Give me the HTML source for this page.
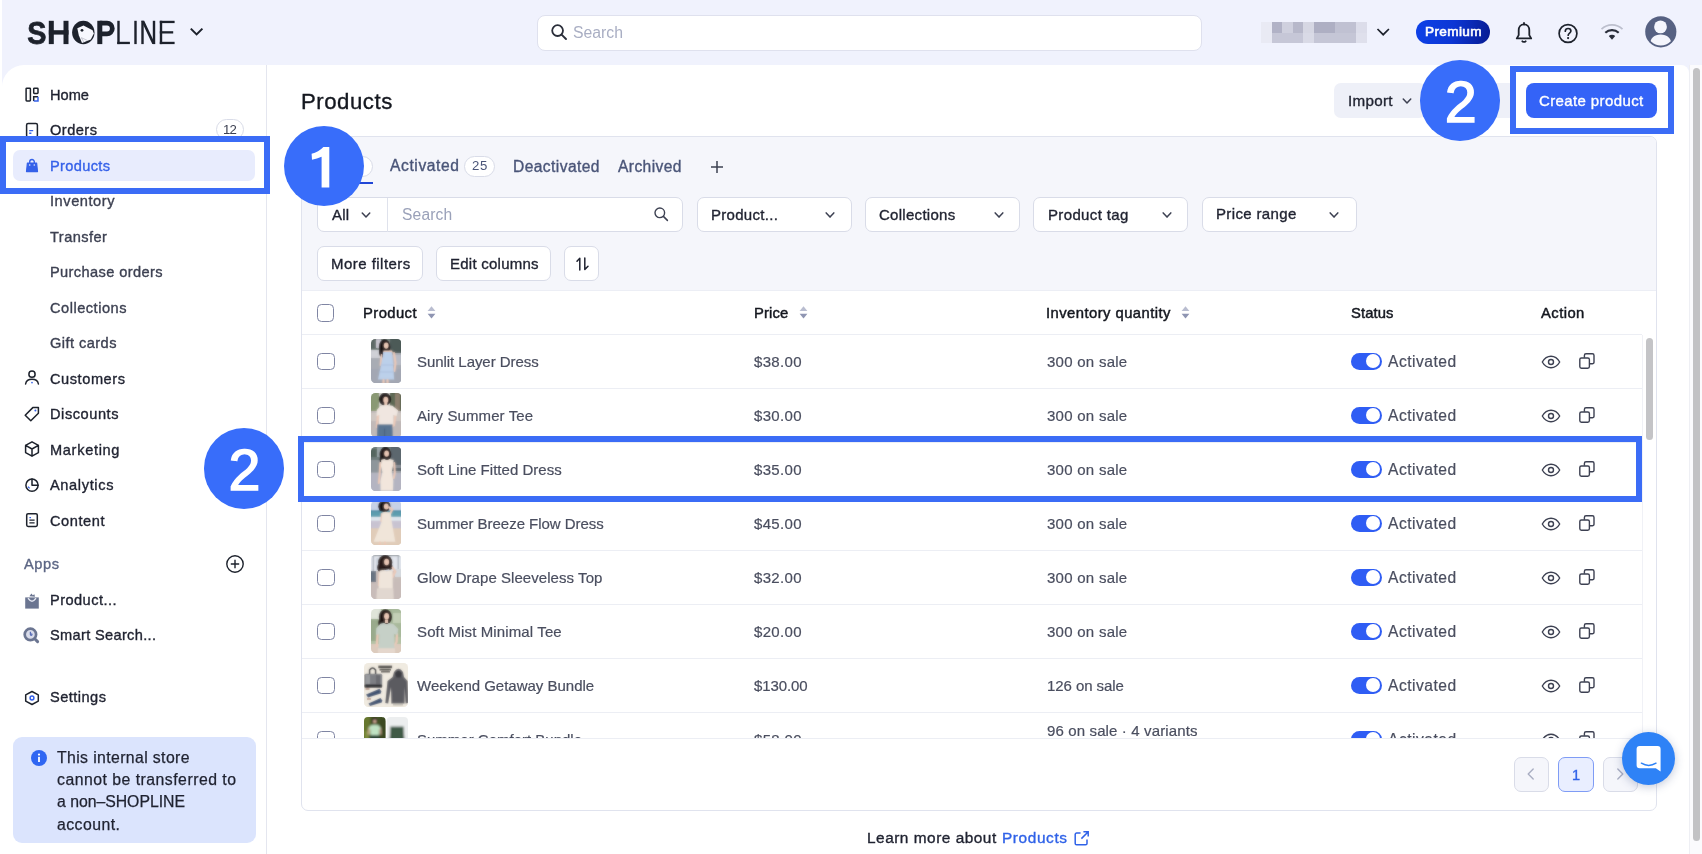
<!DOCTYPE html>
<html>
<head>
<meta charset="utf-8">
<title>Products</title>
<style>
*{box-sizing:border-box;margin:0;padding:0}
html,body{width:1702px;height:854px;overflow:hidden;background:#fff}
body{position:relative;font-family:"Liberation Sans",sans-serif;font-size:14.5px;color:#1f2230}
.a{position:absolute}
.t{position:absolute;white-space:nowrap;line-height:20px;height:20px;will-change:transform}
.m{-webkit-text-stroke:0.35px currentColor}
#hdr{left:0;top:0;width:1702px;height:100px;background:#f0f2fd}
#strip{left:0;top:0;width:2px;height:854px;background:#fff}
#side{left:2px;top:65px;width:265px;height:789px;background:#fff;border-top-left-radius:22px;border-right:1px solid #e4e6ef}
#main{left:267px;top:65px;width:1422px;height:789px;background:#fff;border-top-right-radius:8px}
#sbtrack{left:1689px;top:65px;width:13px;height:789px;background:#fbfbfd;border-left:1px solid #eeeff4}
#sbthumb{left:1692.6px;top:68px;width:7px;height:772.6px;background:#c2c2c4;border-radius:4px}
.nav{color:#1f2230;font-size:14.5px}
.sub{color:#3d4152;font-size:14.5px}
.box{position:absolute;background:#fff;border:1px solid #d9dce8;border-radius:7px}
.hl{position:absolute;border:6px solid #3b6cf6}
.circ{position:absolute;width:80px;height:80px;border-radius:50%;background:#3b6cf6;color:#fff;font-weight:bold;font-size:57px;text-align:center;line-height:80px}
.cb{position:absolute;width:17.6px;height:17.6px;border:1.8px solid #7f85a3;border-radius:4.5px;background:#fff}
.rl{position:absolute;left:302px;width:1340px;height:1px;background:#eceef4}
.row{position:absolute;left:302px;width:1340px;height:54px}
.cell{color:#4a4e5f;font-size:15.3px}
.tg{position:absolute;width:31.3px;height:17.8px;border-radius:9px;background:#2f5df4}
.tg:after{content:"";position:absolute;right:1.8px;top:1.8px;width:14px;height:14px;border-radius:50%;background:#fff}
.th{position:absolute;border-radius:4px;overflow:hidden}
</style>
</head>
<body>
<div class="a" id="hdr"></div>
<div class="a" id="strip"></div>
<div class="a" id="side"></div>
<div class="a" id="main"></div>
<div class="a" id="sbtrack"></div>
<div class="a" id="sbthumb"></div>
<!-- HEADER -->
<!-- logo -->
<svg class="a" style="left:0;top:0;will-change:transform" width="220" height="66" viewBox="0 0 220 66">
  <g fill="#1d222c">
  <text x="27.2" y="44.1" font-family="Liberation Sans" font-weight="bold" font-size="32.2" textLength="19.2" lengthAdjust="spacingAndGlyphs" stroke="#1d222c" stroke-width="0.8">S</text>
  <rect x="48.8" y="20.8" width="5" height="23.3"/><rect x="63.5" y="20.8" width="5" height="23.3"/><rect x="48.8" y="30.2" width="19.7" height="4.4"/>
  <ellipse cx="83.3" cy="32.5" rx="11.2" ry="11.7"/>
  <path d="M99.8 23.2 h7.2 a5.3 5.3 0 0 1 0 10.6 h-7.200" fill="none" stroke="#1d222c" stroke-width="4.8"/><rect x="97.3" y="20.8" width="5" height="23.3"/>
  <rect x="117.300" y="20.8" width="2.400" height="23.3"/><rect x="117.300" y="41.800" width="12.600" height="2.300"/>
  <rect x="134.300" y="20.8" width="2.400" height="23.3"/>
  <rect x="141.300" y="20.8" width="2.400" height="23.3"/><rect x="152.800" y="20.8" width="2.400" height="23.3"/><path d="M141.300 20.8 h2.900 l11 23.300 h-2.900z"/>
  <rect x="159.800" y="20.8" width="2.400" height="23.3"/><rect x="159.800" y="20.8" width="14.800" height="2.300"/><rect x="159.800" y="31.200" width="13.400" height="2.300"/><rect x="159.800" y="41.800" width="14.800" height="2.300"/>
  </g>
  <path d="M77.300 28.200 L83.500 25.400 L92.600 30.300 L93.800 33.500 L90.800 39.400 L82 43 L78.800 35.300z" fill="#f7f8fe"/>
  <circle cx="82" cy="30.300" r="1.400" fill="#1d222c"/>
  <path d="M81 37.500 l6.500 3 M81.500 38 l2.500 4.500" stroke="#9a9ca8" stroke-width="0.500" fill="none"/>
  <path d="M190.800 28.600 l5.800 5.800 5.800-5.800" fill="none" stroke="#1d222c" stroke-width="2"/>
</svg>
<!-- search -->
<div class="box" style="left:536.8px;top:14.7px;width:665px;height:36px;border-color:#dfe1ee;border-radius:8px"></div>
<svg class="a" style="left:550px;top:23px" width="18" height="18" viewBox="0 0 18 18"><circle cx="7.6" cy="7.6" r="5.4" fill="none" stroke="#2a2e3a" stroke-width="1.8"/><path d="M11.6 11.6 L16 16" stroke="#2a2e3a" stroke-width="1.9" stroke-linecap="round"/></svg>
<div class="t" style="left:573px;top:22.5px;font-size:15.8px;color:#a9aec3">Search</div>
<!-- blurred store name -->
<svg class="a" style="left:1261px;top:22px" width="106" height="21" viewBox="0 0 106 21" shape-rendering="crispEdges">
  <rect x="0" y="0" width="106" height="21" fill="#e9eaf4"/>
  <rect x="10.5" y="0" width="10.5" height="10.5" fill="#b1b2c6"/>
  <rect x="21" y="0" width="10.5" height="10.5" fill="#cfd0de"/>
  <rect x="31.5" y="0" width="10.5" height="10.5" fill="#b7b8ca"/>
  <rect x="42" y="0" width="10.5" height="10.5" fill="#d6d7e3"/>
  <rect x="52.5" y="0" width="21.5" height="10.5" fill="#aeafc3"/>
  <rect x="74" y="0" width="21" height="10.5" fill="#c0c1d2"/>
  <rect x="95" y="0" width="11" height="10.5" fill="#dcddea"/>
  <rect x="10.5" y="10.5" width="32" height="10.5" fill="#c6c7d7"/>
  <rect x="42" y="10.5" width="10.5" height="10.5" fill="#d9dae6"/>
  <rect x="52.5" y="10.5" width="42.5" height="10.5" fill="#c5c6d6"/>
  <rect x="95" y="10.5" width="11" height="10.5" fill="#dfe0ec"/>
</svg>
<svg class="a" style="left:1375px;top:26px" width="16" height="12" viewBox="0 0 16 12"><path d="M2.5 3 l5.7 5.7 5.7-5.7" fill="none" stroke="#1d222c" stroke-width="1.7"/></svg>
<!-- premium -->
<div class="a" style="left:1416px;top:20px;width:74px;height:24px;border-radius:12px;background:linear-gradient(100deg,#0e41e8 0%,#0c36d4 50%,#071b90 100%)"></div>
<div class="t" style="left:1424.8px;top:22.2px;font-size:13.6px;color:#fff;letter-spacing:0.365px;-webkit-text-stroke:0.6px #fff">Premium</div>
<!-- bell -->
<svg class="a" style="left:1511.6px;top:20.8px" width="24" height="26" viewBox="0 0 24 26"><path d="M12 3.400 c-3.300 0-5.300 2.500-5.300 5.900 v4.800 l-1.900 3.300 h14.400 l-1.900-3.300 v-4.800 c0-3.400-2-5.900-5.300-5.900z" fill="none" stroke="#1d222c" stroke-width="1.800" stroke-linejoin="round"/><path d="M9.900 19.600 a2.300 2.300 0 0 0 4.200 0" fill="none" stroke="#1d222c" stroke-width="1.700"/><path d="M12 2v1.400" stroke="#1d222c" stroke-width="1.800" stroke-linecap="round"/></svg>
<!-- help -->
<svg class="a" style="left:1555.7px;top:21.3px" width="24" height="24" viewBox="0 0 24 24"><circle cx="12" cy="12.5" r="8.9" fill="none" stroke="#1d222c" stroke-width="1.7"/><path d="M9.3 10.2 c0-1.7 1.2-2.7 2.8-2.7 s2.8 1 2.8 2.5 c0 2-2.7 2.1-2.7 4.2" fill="none" stroke="#1d222c" stroke-width="1.7" stroke-linecap="round"/><circle cx="12.1" cy="17.1" r="1.1" fill="#1d222c"/></svg>
<!-- wifi -->
<svg class="a" style="left:1599.1px;top:21.4px" width="26" height="22" viewBox="0 0 26 22"><path d="M2.5 8.2 a15 15 0 0 1 21 0" fill="none" stroke="#bcbfcd" stroke-width="1.700"/><path d="M6.3 11.8 a9.6 9.6 0 0 1 13.4 0" fill="none" stroke="#2a2e3a" stroke-width="2.1"/><path d="M9.8 15.1 a4.6 4.6 0 0 1 6.4 0 l-3.2 3.6z" fill="#2a2e3a"/></svg>
<!-- avatar -->
<svg class="a" style="left:1644px;top:16px" width="34" height="32" viewBox="0 0 34 32"><defs><clipPath id="avc"><circle cx="16.800" cy="15.800" r="13.700"/></clipPath></defs><circle cx="16.800" cy="15.800" r="15.600" fill="#566182"/><g clip-path="url(#avc)" fill="#f4f5fc"><circle cx="16.500" cy="10.900" r="6.400"/><path d="M5.800 30 c0-8.200 4.600-11.600 10.900-11.600 s10.900 3.400 10.900 11.600z"/></g></svg>

<!-- SIDEBAR -->
<div class="a" style="left:12.5px;top:149.5px;width:242px;height:31px;border-radius:7px;background:#e8ecfd"></div>
<div class="t m" style="left:50.30px;top:85.00px;font-size:14.60px;color:#1f2230;letter-spacing:0.018px;">Home</div>
<div class="t m" style="left:50.30px;top:120.00px;font-size:14.60px;color:#1f2230;letter-spacing:0.476px;">Orders</div>
<div class="t m" style="left:50.30px;top:156.00px;font-size:14.60px;color:#3561e9;letter-spacing:0.340px;">Products</div>
<div class="t m" style="left:50.30px;top:191.00px;font-size:14.60px;color:#3d4152;letter-spacing:0.556px;">Inventory</div>
<div class="t m" style="left:50.30px;top:227.00px;font-size:14.60px;color:#3d4152;letter-spacing:0.455px;">Transfer</div>
<div class="t m" style="left:50.30px;top:262.00px;font-size:14.60px;color:#3d4152;letter-spacing:0.384px;">Purchase orders</div>
<div class="t m" style="left:50.30px;top:298.00px;font-size:14.60px;color:#3d4152;letter-spacing:0.509px;">Collections</div>
<div class="t m" style="left:50.30px;top:333.00px;font-size:14.60px;color:#3d4152;letter-spacing:0.448px;">Gift cards</div>
<div class="t m" style="left:50.30px;top:369.00px;font-size:14.60px;color:#1f2230;letter-spacing:0.552px;">Customers</div>
<div class="t m" style="left:50.30px;top:404.00px;font-size:14.60px;color:#1f2230;letter-spacing:0.549px;">Discounts</div>
<div class="t m" style="left:50.30px;top:440.00px;font-size:14.60px;color:#1f2230;letter-spacing:0.674px;">Marketing</div>
<div class="t m" style="left:50.30px;top:475.00px;font-size:14.60px;color:#1f2230;letter-spacing:0.635px;">Analytics</div>
<div class="t m" style="left:50.30px;top:511.00px;font-size:14.60px;color:#1f2230;letter-spacing:0.561px;">Content</div>
<svg class="a" style="left:23.00px;top:85.35px" width="18" height="18" viewBox="0 0 18 18"><rect x="3.100" y="3.200" width="4.300" height="12.700" rx="0.700" fill="none" stroke="#1d222c" stroke-width="1.5" stroke-linejoin="round" stroke-linecap="round"/><rect x="10.700" y="3.200" width="4.300" height="5.200" rx="0.700" fill="none" stroke="#1d222c" stroke-width="1.5" stroke-linejoin="round" stroke-linecap="round"/><path d="M10.700 15.900 V11.700 H15" fill="none" stroke="#1d222c" stroke-width="1.500"/><path d="M15 11.700 V15.900 H10.700" fill="none" stroke="#3561e9" stroke-width="1.500"/></svg>
<svg class="a" style="left:23.00px;top:121.05px" width="18" height="18" viewBox="0 0 18 18"><rect x="3.600" y="2.400" width="10.800" height="13.600" rx="1.500" fill="none" stroke="#1d222c" stroke-width="1.5" stroke-linejoin="round" stroke-linecap="round"/><path d="M6.200 9.600 h4 M6.200 12.200 h2.200" stroke="#3561e9" stroke-width="1.400"/></svg>
<svg class="a" style="left:23.00px;top:156.05px" width="18" height="18" viewBox="0 0 18 18"><path d="M4.400 7 h9.200 l0.900 8.600 h-11z" fill="#3561e9" stroke="#3561e9" stroke-width="1.200" stroke-linejoin="round"/><path d="M6.700 8.400 v-2.600 a2.300 2.300 0 0 1 4.600 0 v2.600" fill="none" stroke="#3561e9" stroke-width="1.400"/><circle cx="6.700" cy="9" r="0.800" fill="#e8ecfd"/><circle cx="11.300" cy="9" r="0.800" fill="#e8ecfd"/></svg>
<svg class="a" style="left:23.00px;top:369.05px" width="18" height="18" viewBox="0 0 18 18"><circle cx="9" cy="5.200" r="3.100" fill="none" stroke="#1d222c" stroke-width="1.5" stroke-linejoin="round" stroke-linecap="round"/><path d="M2.600 15 c0.500-3.400 3-4.800 6.400-4.800 s5.900 1.400 6.400 4.800" fill="none" stroke="#1d222c" stroke-width="1.5" stroke-linejoin="round" stroke-linecap="round"/><circle cx="9" cy="13.600" r="0.850" fill="#3561e9"/></svg>
<svg class="a" style="left:23.00px;top:404.55px" width="18" height="18" viewBox="0 0 18 18"><path d="M9.800 2.600 h5.600 v5.600 l-7.600 7.600 -5.600-5.600z" fill="none" stroke="#1d222c" stroke-width="1.5" stroke-linejoin="round" stroke-linecap="round"/><circle cx="12.400" cy="5.600" r="1" fill="#3561e9"/></svg>
<svg class="a" style="left:23.00px;top:440.05px" width="18" height="18" viewBox="0 0 18 18"><path d="M9 1.800 l6.400 3.600 v7.200 l-6.400 3.600 -6.400-3.600 v-7.200z M2.600 5.400 l6.400 3.600 6.400-3.600 M9 9 v7.200" fill="none" stroke="#1d222c" stroke-width="1.5" stroke-linejoin="round" stroke-linecap="round"/></svg>
<svg class="a" style="left:23.00px;top:475.55px" width="18" height="18" viewBox="0 0 18 18"><circle cx="9" cy="9.200" r="6.100" fill="none" stroke="#1d222c" stroke-width="1.5" stroke-linejoin="round" stroke-linecap="round"/><path d="M9 3.100 v6.100 h6.100" fill="none" stroke="#1d222c" stroke-width="1.5" stroke-linejoin="round" stroke-linecap="round"/><path d="M5 10.600 l1.600 1.800" stroke="#3561e9" stroke-width="1.300" fill="none"/></svg>
<svg class="a" style="left:23.00px;top:511.35px" width="18" height="18" viewBox="0 0 18 18"><rect x="3.700" y="2.700" width="10.600" height="12.800" rx="1.400" fill="none" stroke="#1d222c" stroke-width="1.5" stroke-linejoin="round" stroke-linecap="round"/><path d="M6.400 6.600 h1.600" stroke="#3561e9" stroke-width="1.300"/><path d="M6.400 9.200 h5.200 M6.400 11.800 h5.200" stroke="#1d222c" stroke-width="1.300"/></svg>
<div class="a" style="left:215.5px;top:118.6px;width:28.7px;height:21.9px;border-radius:11px;border:1px solid #d9dce8;background:#fff"></div>
<div class="t" style="left:223.20px;top:120.00px;font-size:13.20px;color:#3d4152;letter-spacing:-0.883px;">12</div>
<div class="t m" style="left:23.80px;top:554.00px;font-size:14.60px;color:#5b6584;letter-spacing:0.574px;">Apps</div>
<svg class="a" style="left:225.00px;top:554.00px" width="20" height="20" viewBox="0 0 20 20"><circle cx="10" cy="10" r="8.200" fill="none" stroke="#1d222c" stroke-width="1.400"/><path d="M10 5.800 v8.400 M5.800 10 h8.400" stroke="#1d222c" stroke-width="1.400"/></svg>
<div class="t m" style="left:50.30px;top:590.00px;font-size:14.60px;color:#1f2230;letter-spacing:0.446px;">Product...</div>
<div class="t m" style="left:50.30px;top:625.00px;font-size:14.60px;color:#1f2230;letter-spacing:0.327px;">Smart Search...</div>
<svg class="a" style="left:23.20px;top:592.20px" width="18" height="18" viewBox="0 0 18 18"><path d="M2.200 5.400 h13.600 v11.200 h-13.600z" fill="#6b7591"/><path d="M6.400 4.200 l2-2.600 1.400 1.600 1.600-1 0.600 2.600z" fill="#6b7591"/><path d="M5.400 6.600 q3.600 5.200 7.200 0" fill="none" stroke="#e4e7f2" stroke-width="1.500" stroke-linecap="round"/></svg>
<svg class="a" style="left:22.20px;top:625.80px" width="18" height="18" viewBox="0 0 18 18"><circle cx="8.400" cy="8.400" r="5.700" fill="#d9dcea" stroke="#6b7591" stroke-width="2.700"/><path d="M13.200 13.200 L15.600 15.600" stroke="#6b7591" stroke-width="3" stroke-linecap="round"/><path d="M8.400 5.800 v2.800 a0.800 0.800 0 1 0 0.800-0.800" stroke="#5b6fb8" stroke-width="1.300" fill="none"/></svg>
<div class="t m" style="left:50.30px;top:687.00px;font-size:14.60px;color:#1f2230;letter-spacing:0.464px;">Settings</div>
<svg class="a" style="left:23.25px;top:688.50px" width="18" height="18" viewBox="0 0 18 18"><path d="M9 2.500 l6.300 3.400 v6.200 l-6.300 3.400 -6.300-3.400 v-6.200z" fill="none" stroke="#1d222c" stroke-width="1.5" stroke-linejoin="round" stroke-linecap="round"/><circle cx="9" cy="9" r="1.900" fill="none" stroke="#3561e9" stroke-width="1.500"/></svg>
<div class="a" style="left:12.5px;top:736.5px;width:243px;height:106.5px;border-radius:9px;background:#dbe4fd"></div>
<svg class="a" style="left:30.8px;top:750px" width="16" height="16" viewBox="0 0 16 16"><circle cx="8" cy="8" r="8" fill="#2f66f2"/><rect x="7.100" y="6.800" width="1.800" height="5.200" fill="#fff"/><circle cx="8" cy="4.600" r="1.100" fill="#fff"/></svg>
<div class="t" style="left:56.80px;top:748.00px;font-size:15.80px;color:#1f2230;letter-spacing:0.385px;-webkit-text-stroke:0.25px #1f2230;">This internal store</div>
<div class="t" style="left:56.80px;top:770.00px;font-size:15.80px;color:#1f2230;letter-spacing:0.489px;-webkit-text-stroke:0.25px #1f2230;">cannot be transferred to</div>
<div class="t" style="left:56.80px;top:792.00px;font-size:15.80px;color:#1f2230;letter-spacing:-0.018px;-webkit-text-stroke:0.25px #1f2230;">a non–SHOPLINE</div>
<div class="t" style="left:56.80px;top:815.00px;font-size:15.80px;color:#1f2230;letter-spacing:0.467px;-webkit-text-stroke:0.25px #1f2230;">account.</div>

<!-- MAIN -->
<div class="t m" style="left:300.70px;top:92.00px;font-size:22.20px;color:#14171f;letter-spacing:0.527px;">Products</div>
<div class="a" style="left:1334px;top:83.3px;width:92px;height:34.5px;border-radius:7px;background:#eef0f8"></div>
<div class="a" style="left:1436px;top:83.3px;width:80px;height:34.5px;border-radius:7px;background:#eef0f8"></div>
<div class="t m" style="left:1347.70px;top:91.00px;font-size:15.20px;color:#1f2230;letter-spacing:0.284px;">Import</div>
<svg class="a" style="left:1400.30px;top:95.50px" width="14" height="10" viewBox="0 0 14 10"><path d="M3.25 3.00 l3.75 4.00 3.75 -4.00" fill="none" stroke="#3d4152" stroke-width="1.5" stroke-linecap="round" stroke-linejoin="round"/></svg>
<div class="a" style="left:301px;top:136px;width:1355.5px;height:674.5px;border:1px solid #e0e3ee;border-radius:7px;background:#fff;overflow:hidden"><div style="height:154px;background:#f5f6fb;border-bottom:1px solid #eceef5"></div></div>
<div class="a" style="left:342px;top:155.6px;width:30.7px;height:21.9px;border-radius:11px;border:1px solid #d9dce8;background:#fff"></div>
<div class="a" style="left:318px;top:181.8px;width:54.5px;height:2.2px;background:#2046d6"></div>
<div class="t m" style="left:390.00px;top:156.00px;font-size:15.60px;color:#4a5578;letter-spacing:0.604px;">Activated</div>
<div class="a" style="left:464px;top:155.6px;width:30.7px;height:21.9px;border-radius:11px;border:1px solid #d9dce8;background:#fff"></div>
<div class="t" style="left:472.00px;top:156.00px;font-size:13.20px;color:#4a5578;letter-spacing:0.617px;">25</div>
<div class="t m" style="left:512.80px;top:157.00px;font-size:15.60px;color:#4a5578;letter-spacing:0.412px;">Deactivated</div>
<div class="t m" style="left:617.80px;top:157.00px;font-size:15.60px;color:#4a5578;letter-spacing:0.401px;">Archived</div>
<svg class="a" style="left:710px;top:159.500px" width="14" height="14" viewBox="0 0 14 14"><path d="M7 1 v12 M1 7 h12" stroke="#3d4152" stroke-width="1.500"/></svg>
<div class="box" style="left:317.2px;top:197.3px;width:365.8px;height:35px"></div>
<div class="a" style="left:387px;top:198px;width:1px;height:33.5px;background:#dfe2ec"></div>
<div class="t m" style="left:332.00px;top:205.00px;font-size:15.00px;color:#1f2230;letter-spacing:0.164px;">All</div>
<svg class="a" style="left:359.00px;top:209.80px" width="14" height="10" viewBox="0 0 14 10"><path d="M3.25 3.00 l3.75 4.00 3.75 -4.00" fill="none" stroke="#3d4152" stroke-width="1.5" stroke-linecap="round" stroke-linejoin="round"/></svg>
<div class="t" style="left:401.70px;top:205.00px;font-size:15.60px;color:#9aa1b9;letter-spacing:0.154px;">Search</div>
<svg class="a" style="left:653px;top:206px" width="16" height="16" viewBox="0 0 16 16"><circle cx="6.800" cy="6.800" r="4.800" fill="none" stroke="#3d4152" stroke-width="1.400"/><path d="M10.400 10.400 L14.400 14.400" stroke="#3d4152" stroke-width="1.500" stroke-linecap="round"/></svg>
<div class="box" style="left:696.70px;top:197.3px;width:155px;height:35px"></div>
<div class="t m" style="left:710.80px;top:205.00px;font-size:15.00px;color:#1f2230;letter-spacing:0.289px;">Product...</div>
<svg class="a" style="left:823.40px;top:210.00px" width="14" height="10" viewBox="0 0 14 10"><path d="M3.20 2.90 l3.80 4.20 3.80 -4.20" fill="none" stroke="#3d4152" stroke-width="1.5" stroke-linecap="round" stroke-linejoin="round"/></svg>
<div class="box" style="left:864.70px;top:197.3px;width:155px;height:35px"></div>
<div class="t m" style="left:878.80px;top:205.00px;font-size:15.00px;color:#1f2230;letter-spacing:0.283px;">Collections</div>
<svg class="a" style="left:991.60px;top:210.00px" width="14" height="10" viewBox="0 0 14 10"><path d="M3.20 2.90 l3.80 4.20 3.80 -4.20" fill="none" stroke="#3d4152" stroke-width="1.5" stroke-linecap="round" stroke-linejoin="round"/></svg>
<div class="box" style="left:1033.40px;top:197.3px;width:155px;height:35px"></div>
<div class="t m" style="left:1047.50px;top:205.00px;font-size:15.00px;color:#1f2230;letter-spacing:0.358px;">Product tag</div>
<svg class="a" style="left:1160.00px;top:210.00px" width="14" height="10" viewBox="0 0 14 10"><path d="M3.20 2.90 l3.80 4.20 3.80 -4.20" fill="none" stroke="#3d4152" stroke-width="1.5" stroke-linecap="round" stroke-linejoin="round"/></svg>
<div class="box" style="left:1201.70px;top:197.3px;width:155px;height:35px"></div>
<div class="t m" style="left:1215.80px;top:204.00px;font-size:15.00px;color:#1f2230;letter-spacing:0.359px;">Price range</div>
<svg class="a" style="left:1327.00px;top:210.00px" width="14" height="10" viewBox="0 0 14 10"><path d="M3.20 2.90 l3.80 4.20 3.80 -4.20" fill="none" stroke="#3d4152" stroke-width="1.5" stroke-linecap="round" stroke-linejoin="round"/></svg>
<div class="box" style="left:317.2px;top:246px;width:105.6px;height:35px"></div>
<div class="t m" style="left:331.20px;top:254.00px;font-size:15.00px;color:#1f2230;letter-spacing:0.465px;">More filters</div>
<div class="box" style="left:436px;top:246px;width:114.8px;height:35px"></div>
<div class="t m" style="left:449.50px;top:254.00px;font-size:15.00px;color:#1f2230;letter-spacing:0.248px;">Edit columns</div>
<div class="box" style="left:563.7px;top:246px;width:35.3px;height:35px"></div>
<svg class="a" style="left:574.5px;top:256px" width="16" height="16" viewBox="0 0 16 16"><path d="M2 5.200 L4.800 2.200 V14 M9.800 2 V13.600 L13 10.200" fill="none" stroke="#1f2230" stroke-width="1.500" stroke-linejoin="round" stroke-linecap="round"/></svg>
<div class="cb" style="left:316.7px;top:304px"></div>
<div class="t" style="left:363.20px;top:303.00px;font-size:14.80px;color:#14171f;letter-spacing:0.416px;-webkit-text-stroke:0.45px #14171f;">Product</div>
<svg class="a" style="left:426.70px;top:305.80px" width="9" height="13" viewBox="0 0 9 13"><path d="M4.500 0.300 L8.400 5 H0.600z" fill="#b9bdd0"/><path d="M4.500 12.500 L8.400 7.800 H0.600z" fill="#8f95b2"/></svg>
<div class="t" style="left:753.70px;top:303.00px;font-size:14.80px;color:#14171f;letter-spacing:0.145px;-webkit-text-stroke:0.45px #14171f;">Price</div>
<svg class="a" style="left:798.70px;top:305.80px" width="9" height="13" viewBox="0 0 9 13"><path d="M4.500 0.300 L8.400 5 H0.600z" fill="#b9bdd0"/><path d="M4.500 12.500 L8.400 7.800 H0.600z" fill="#8f95b2"/></svg>
<div class="t" style="left:1045.70px;top:303.00px;font-size:14.80px;color:#14171f;letter-spacing:0.451px;-webkit-text-stroke:0.45px #14171f;">Inventory quantity</div>
<svg class="a" style="left:1180.50px;top:305.80px" width="9" height="13" viewBox="0 0 9 13"><path d="M4.500 0.300 L8.400 5 H0.600z" fill="#b9bdd0"/><path d="M4.500 12.500 L8.400 7.800 H0.600z" fill="#8f95b2"/></svg>
<div class="t" style="left:1351.00px;top:303.00px;font-size:14.80px;color:#14171f;letter-spacing:0.108px;-webkit-text-stroke:0.45px #14171f;">Status</div>
<div class="t" style="left:1540.90px;top:303.00px;font-size:14.80px;color:#14171f;letter-spacing:0.433px;-webkit-text-stroke:0.45px #14171f;">Action</div>
<div class="rl" style="top:334px"></div>
<div class="a" style="left:0;top:335px;width:1656px;height:403px;overflow:hidden">
<div class="cb" style="left:317.3px;top:17.60px"></div>
<svg class="a" style="left:370.50px;top:4.30px" width="30.6" height="44.2" viewBox="0 0 30.6 44.2"><defs><clipPath id="tc0"><rect width="30.6" height="44.2" rx="4.5"/></clipPath><filter id="tb0" x="-10%" y="-10%" width="120%" height="120%"><feGaussianBlur stdDeviation="0.80"/></filter></defs><g clip-path="url(#tc0)"><g filter="url(#tb0)"><rect x="-2" y="-2" width="35" height="48" fill="#a9acb4" /><rect x="-2" y="-2" width="35" height="13" fill="#7d8783" /><rect x="19" y="-2" width="14" height="16" fill="#4d5a58" /><rect x="-2" y="-2" width="8" height="12" fill="#5f6b67" /><rect x="5" y="0" width="5" height="9" fill="#c9c6cf" /><rect x="-2" y="11" width="12" height="8" fill="#cfd0d6" /><rect x="-2" y="30" width="35" height="16" fill="#a3a7b3" /><rect x="20" y="16" width="13" height="10" fill="#b9bcc6" /><ellipse cx="13.6" cy="8" rx="5.73" ry="7.69" fill="#1a1314"/><ellipse cx="11.3" cy="13" rx="3.37" ry="5.45" fill="#1a1314"/><ellipse cx="15.2" cy="6.6" rx="2.4" ry="3.1" fill="#ecc9b7"/><path d="M12.5 11.5 L21 11.5 L22 14 L12 14z" fill="#ecc9b7"/><path d="M23 14 L24.5 24 L23.5 32" fill="none" stroke="#ecc9b7" stroke-width="2" stroke-linecap="round"/><path d="M10.5 16 L9.5 26" fill="none" stroke="#ecc9b7" stroke-width="1.8" stroke-linecap="round"/><path d="M12.3 13 L20.8 13 L22 24 L23.2 40.500 L7 40.500 L10.500 24z" fill="#bcd0ea"/><path d="M10 26 h12 M8.5 33 h14" fill="none" stroke="#a9c0df" stroke-width="0.8" stroke-linecap="round"/><path d="M12.5 41 v4 M16.5 41 v4" fill="none" stroke="#ecc9b7" stroke-width="2.2" stroke-linecap="round"/></g><g opacity="0.4"><rect x="-2" y="-2" width="35" height="48" fill="#a9acb4" /><rect x="-2" y="-2" width="35" height="13" fill="#7d8783" /><rect x="19" y="-2" width="14" height="16" fill="#4d5a58" /><rect x="-2" y="-2" width="8" height="12" fill="#5f6b67" /><rect x="5" y="0" width="5" height="9" fill="#c9c6cf" /><rect x="-2" y="11" width="12" height="8" fill="#cfd0d6" /><rect x="-2" y="30" width="35" height="16" fill="#a3a7b3" /><rect x="20" y="16" width="13" height="10" fill="#b9bcc6" /><ellipse cx="13.6" cy="8" rx="5.73" ry="7.69" fill="#1a1314"/><ellipse cx="11.3" cy="13" rx="3.37" ry="5.45" fill="#1a1314"/><ellipse cx="15.2" cy="6.6" rx="2.4" ry="3.1" fill="#ecc9b7"/><path d="M12.5 11.5 L21 11.5 L22 14 L12 14z" fill="#ecc9b7"/><path d="M23 14 L24.5 24 L23.5 32" fill="none" stroke="#ecc9b7" stroke-width="2" stroke-linecap="round"/><path d="M10.5 16 L9.5 26" fill="none" stroke="#ecc9b7" stroke-width="1.8" stroke-linecap="round"/><path d="M12.3 13 L20.8 13 L22 24 L23.2 40.500 L7 40.500 L10.500 24z" fill="#bcd0ea"/><path d="M10 26 h12 M8.5 33 h14" fill="none" stroke="#a9c0df" stroke-width="0.8" stroke-linecap="round"/><path d="M12.5 41 v4 M16.5 41 v4" fill="none" stroke="#ecc9b7" stroke-width="2.2" stroke-linecap="round"/></g></g></svg>
<div class="t" style="left:417.00px;top:17.00px;font-size:15.00px;color:#4a4e5f;letter-spacing:-0.050px;-webkit-text-stroke:0.2px #4a4e5f;">Sunlit Layer Dress</div>
<div class="t" style="left:754.00px;top:17.00px;font-size:15.00px;color:#4a4e5f;letter-spacing:0.344px;-webkit-text-stroke:0.2px #4a4e5f;">$38.00</div>
<div class="t" style="left:1046.60px;top:17.00px;font-size:15.00px;color:#4a4e5f;letter-spacing:0.263px;-webkit-text-stroke:0.2px #4a4e5f;">300 on sale</div>
<div class="tg" style="left:1350.5px;top:17.60px"></div>
<div class="t" style="left:1387.70px;top:17.00px;font-size:15.60px;color:#4a4e5f;letter-spacing:0.504px;-webkit-text-stroke:0.2px #4a4e5f;">Activated</div>
<svg class="a" style="left:1540.9px;top:18.70px" width="20" height="16" viewBox="0 0 20 16"><path d="M1.300 8 C3.800 3.600 6.800 2.200 10 2.200 S16.200 3.600 18.700 8 C16.200 12.400 13.200 13.800 10 13.800 S3.800 12.400 1.300 8z" fill="none" stroke="#3d4152" stroke-width="1.400" stroke-linejoin="round"/><circle cx="10" cy="8" r="2.500" fill="none" stroke="#3d4152" stroke-width="1.400"/></svg>
<svg class="a" style="left:1577.8px;top:17.10px" width="18" height="18" viewBox="0 0 18 18"><rect x="1.800" y="6" width="9.600" height="10.200" rx="1.600" fill="none" stroke="#3d4152" stroke-width="1.400"/><path d="M6.400 5.800 V3.400 a1.600 1.600 0 0 1 1.600-1.600 h6.400 a1.600 1.600 0 0 1 1.600 1.600 v6.800 a1.600 1.600 0 0 1-1.600 1.600 h-2.800" fill="none" stroke="#3d4152" stroke-width="1.400"/></svg>
<div class="rl" style="top:53.00px"></div>
<div class="cb" style="left:317.3px;top:71.60px"></div>
<svg class="a" style="left:370.50px;top:58.30px" width="30.6" height="44.2" viewBox="0 0 30.6 44.2"><defs><clipPath id="tc1"><rect width="30.6" height="44.2" rx="4.5"/></clipPath><filter id="tb1" x="-10%" y="-10%" width="120%" height="120%"><feGaussianBlur stdDeviation="0.80"/></filter></defs><g clip-path="url(#tc1)"><g filter="url(#tb1)"><rect x="-2" y="-2" width="35" height="48" fill="#c6bfbd" /><rect x="-2" y="-2" width="10" height="20" fill="#8b9a74" /><rect x="19" y="-2" width="14" height="20" fill="#5f6a55" /><rect x="8" y="-2" width="11" height="14" fill="#d9d6d2" /><rect x="24" y="0" width="5" height="18" fill="#8d7f6e" /><rect x="-2" y="20" width="35" height="8" fill="#cfc8c4" /><rect x="-2" y="28" width="35" height="18" fill="#c1b9b8" /><ellipse cx="14" cy="6.2" rx="6.08" ry="6.35" fill="#1a1314"/><ellipse cx="14.8" cy="7" rx="2.5" ry="3.2" fill="#ecc9b7"/><rect x="13.3" y="10" width="3" height="3" fill="#ecc9b7" /><path d="M7 22 L5.800 34" fill="none" stroke="#ecc9b7" stroke-width="2.2" stroke-linecap="round"/><path d="M24.500 22 L23 32 L20 34" fill="none" stroke="#ecc9b7" stroke-width="2.2" stroke-linecap="round"/><path d="M9.500 12.800 Q15 11.200 21.500 12.800 L27.200 17.500 L25.500 23 L22.300 22 L22.300 31.600 L7.800 31.600 L8.300 22 L5.600 23 L5.800 17z" fill="#f0e7e0"/><path d="M6.300 31.500 L21.400 31.500 L21.800 46 L6 46z" fill="#5a7592"/><path d="M13.600 36 v10" fill="none" stroke="#46607c" stroke-width="0.9" stroke-linecap="round"/></g><g opacity="0.4"><rect x="-2" y="-2" width="35" height="48" fill="#c6bfbd" /><rect x="-2" y="-2" width="10" height="20" fill="#8b9a74" /><rect x="19" y="-2" width="14" height="20" fill="#5f6a55" /><rect x="8" y="-2" width="11" height="14" fill="#d9d6d2" /><rect x="24" y="0" width="5" height="18" fill="#8d7f6e" /><rect x="-2" y="20" width="35" height="8" fill="#cfc8c4" /><rect x="-2" y="28" width="35" height="18" fill="#c1b9b8" /><ellipse cx="14" cy="6.2" rx="6.08" ry="6.35" fill="#1a1314"/><ellipse cx="14.8" cy="7" rx="2.5" ry="3.2" fill="#ecc9b7"/><rect x="13.3" y="10" width="3" height="3" fill="#ecc9b7" /><path d="M7 22 L5.800 34" fill="none" stroke="#ecc9b7" stroke-width="2.2" stroke-linecap="round"/><path d="M24.500 22 L23 32 L20 34" fill="none" stroke="#ecc9b7" stroke-width="2.2" stroke-linecap="round"/><path d="M9.500 12.800 Q15 11.200 21.500 12.800 L27.200 17.500 L25.500 23 L22.300 22 L22.300 31.600 L7.800 31.600 L8.300 22 L5.600 23 L5.800 17z" fill="#f0e7e0"/><path d="M6.300 31.500 L21.400 31.500 L21.800 46 L6 46z" fill="#5a7592"/><path d="M13.600 36 v10" fill="none" stroke="#46607c" stroke-width="0.9" stroke-linecap="round"/></g></g></svg>
<div class="t" style="left:417.00px;top:71.00px;font-size:15.00px;color:#4a4e5f;letter-spacing:0.089px;-webkit-text-stroke:0.2px #4a4e5f;">Airy Summer Tee</div>
<div class="t" style="left:754.00px;top:71.00px;font-size:15.00px;color:#4a4e5f;letter-spacing:0.344px;-webkit-text-stroke:0.2px #4a4e5f;">$30.00</div>
<div class="t" style="left:1046.60px;top:71.00px;font-size:15.00px;color:#4a4e5f;letter-spacing:0.263px;-webkit-text-stroke:0.2px #4a4e5f;">300 on sale</div>
<div class="tg" style="left:1350.5px;top:71.60px"></div>
<div class="t" style="left:1387.70px;top:71.00px;font-size:15.60px;color:#4a4e5f;letter-spacing:0.504px;-webkit-text-stroke:0.2px #4a4e5f;">Activated</div>
<svg class="a" style="left:1540.9px;top:72.70px" width="20" height="16" viewBox="0 0 20 16"><path d="M1.300 8 C3.800 3.600 6.800 2.200 10 2.200 S16.200 3.600 18.700 8 C16.200 12.400 13.200 13.800 10 13.800 S3.800 12.400 1.300 8z" fill="none" stroke="#3d4152" stroke-width="1.400" stroke-linejoin="round"/><circle cx="10" cy="8" r="2.500" fill="none" stroke="#3d4152" stroke-width="1.400"/></svg>
<svg class="a" style="left:1577.8px;top:71.10px" width="18" height="18" viewBox="0 0 18 18"><rect x="1.800" y="6" width="9.600" height="10.200" rx="1.600" fill="none" stroke="#3d4152" stroke-width="1.400"/><path d="M6.400 5.800 V3.400 a1.600 1.600 0 0 1 1.600-1.600 h6.400 a1.600 1.600 0 0 1 1.600 1.600 v6.800 a1.600 1.600 0 0 1-1.600 1.600 h-2.800" fill="none" stroke="#3d4152" stroke-width="1.400"/></svg>
<div class="rl" style="top:107.00px"></div>
<div class="cb" style="left:317.3px;top:125.60px"></div>
<svg class="a" style="left:370.50px;top:112.30px" width="30.6" height="44.2" viewBox="0 0 30.6 44.2"><defs><clipPath id="tc2"><rect width="30.6" height="44.2" rx="4.5"/></clipPath><filter id="tb2" x="-10%" y="-10%" width="120%" height="120%"><feGaussianBlur stdDeviation="0.80"/></filter></defs><g clip-path="url(#tc2)"><g filter="url(#tb2)"><rect x="-2" y="-2" width="35" height="48" fill="#a0a5ab" /><rect x="-2" y="-2" width="35" height="15" fill="#6f7d7c" /><rect x="20" y="-2" width="13" height="26" fill="#5d676e" /><rect x="-2" y="2" width="9" height="8" fill="#56665f" /><rect x="6" y="-2" width="6" height="12" fill="#9aa5a8" /><rect x="-2" y="13" width="12" height="12" fill="#8e969b" /><rect x="-2" y="26" width="35" height="20" fill="#b4b5c1" /><rect x="22" y="18" width="11" height="3" fill="#8a9097" /><ellipse cx="14.4" cy="7.6" rx="5.85" ry="7.69" fill="#1a1314"/><ellipse cx="11.7" cy="12.5" rx="3.01" ry="4.33" fill="#1a1314"/><ellipse cx="15.6" cy="6.6" rx="2.4" ry="3.2" fill="#ecc9b7"/><path d="M9.300 16 L8.600 28 L7.800 36" fill="none" stroke="#ecc9b7" stroke-width="2" stroke-linecap="round"/><path d="M23.300 16 L23.800 26 L22.800 31" fill="none" stroke="#ecc9b7" stroke-width="2" stroke-linecap="round"/><path d="M10.200 12.800 L13.500 12 Q15.800 14 18.600 12 L22.600 13 L22 19 L20.800 25 L22.300 34 L22 43.800 L9.600 43.800 L9.400 34 L11.400 25 L10 19z" fill="#f2e7dd"/></g><g opacity="0.4"><rect x="-2" y="-2" width="35" height="48" fill="#a0a5ab" /><rect x="-2" y="-2" width="35" height="15" fill="#6f7d7c" /><rect x="20" y="-2" width="13" height="26" fill="#5d676e" /><rect x="-2" y="2" width="9" height="8" fill="#56665f" /><rect x="6" y="-2" width="6" height="12" fill="#9aa5a8" /><rect x="-2" y="13" width="12" height="12" fill="#8e969b" /><rect x="-2" y="26" width="35" height="20" fill="#b4b5c1" /><rect x="22" y="18" width="11" height="3" fill="#8a9097" /><ellipse cx="14.4" cy="7.6" rx="5.85" ry="7.69" fill="#1a1314"/><ellipse cx="11.7" cy="12.5" rx="3.01" ry="4.33" fill="#1a1314"/><ellipse cx="15.6" cy="6.6" rx="2.4" ry="3.2" fill="#ecc9b7"/><path d="M9.300 16 L8.600 28 L7.800 36" fill="none" stroke="#ecc9b7" stroke-width="2" stroke-linecap="round"/><path d="M23.300 16 L23.800 26 L22.800 31" fill="none" stroke="#ecc9b7" stroke-width="2" stroke-linecap="round"/><path d="M10.200 12.800 L13.500 12 Q15.800 14 18.600 12 L22.600 13 L22 19 L20.800 25 L22.300 34 L22 43.800 L9.600 43.800 L9.400 34 L11.400 25 L10 19z" fill="#f2e7dd"/></g></g></svg>
<div class="t" style="left:417.00px;top:125.00px;font-size:15.00px;color:#4a4e5f;letter-spacing:0.022px;-webkit-text-stroke:0.2px #4a4e5f;">Soft Line Fitted Dress</div>
<div class="t" style="left:754.00px;top:125.00px;font-size:15.00px;color:#4a4e5f;letter-spacing:0.344px;-webkit-text-stroke:0.2px #4a4e5f;">$35.00</div>
<div class="t" style="left:1046.60px;top:125.00px;font-size:15.00px;color:#4a4e5f;letter-spacing:0.263px;-webkit-text-stroke:0.2px #4a4e5f;">300 on sale</div>
<div class="tg" style="left:1350.5px;top:125.60px"></div>
<div class="t" style="left:1387.70px;top:125.00px;font-size:15.60px;color:#4a4e5f;letter-spacing:0.504px;-webkit-text-stroke:0.2px #4a4e5f;">Activated</div>
<svg class="a" style="left:1540.9px;top:126.70px" width="20" height="16" viewBox="0 0 20 16"><path d="M1.300 8 C3.800 3.600 6.800 2.200 10 2.200 S16.200 3.600 18.700 8 C16.200 12.400 13.200 13.800 10 13.800 S3.800 12.400 1.300 8z" fill="none" stroke="#3d4152" stroke-width="1.400" stroke-linejoin="round"/><circle cx="10" cy="8" r="2.500" fill="none" stroke="#3d4152" stroke-width="1.400"/></svg>
<svg class="a" style="left:1577.8px;top:125.10px" width="18" height="18" viewBox="0 0 18 18"><rect x="1.800" y="6" width="9.600" height="10.200" rx="1.600" fill="none" stroke="#3d4152" stroke-width="1.400"/><path d="M6.400 5.800 V3.400 a1.600 1.600 0 0 1 1.600-1.600 h6.400 a1.600 1.600 0 0 1 1.600 1.600 v6.800 a1.600 1.600 0 0 1-1.600 1.600 h-2.800" fill="none" stroke="#3d4152" stroke-width="1.400"/></svg>
<div class="rl" style="top:161.00px"></div>
<div class="cb" style="left:317.3px;top:179.60px"></div>
<svg class="a" style="left:370.50px;top:166.30px" width="30.6" height="44.2" viewBox="0 0 30.6 44.2"><defs><clipPath id="tc3"><rect width="30.6" height="44.2" rx="4.5"/></clipPath><filter id="tb3" x="-10%" y="-10%" width="120%" height="120%"><feGaussianBlur stdDeviation="0.80"/></filter></defs><g clip-path="url(#tc3)"><g filter="url(#tb3)"><rect x="-2" y="-2" width="35" height="48" fill="#e0ccb9" /><rect x="-2" y="-2" width="35" height="12" fill="#c7d1e7" /><rect x="-2" y="9.5" width="35" height="6.8" fill="#5d9eae" /><rect x="-2" y="9.5" width="35" height="1.6" fill="#4f8fa6" /><rect x="-2" y="15.8" width="35" height="4.2" fill="#dfe6ed" /><rect x="-2" y="19.8" width="35" height="7.5" fill="#c9c4d1" /><ellipse cx="13.4" cy="5.2" rx="6.08" ry="5.79" fill="#1a1314"/><ellipse cx="10.2" cy="6.5" rx="2.42" ry="3.66" fill="#1a1314"/><ellipse cx="15.3" cy="5.6" rx="2.4" ry="3" fill="#ecc9b7"/><path d="M19 13 L21.300 8.500 L18.200 6.500" fill="none" stroke="#ecc9b7" stroke-width="2.2" stroke-linecap="round"/><path d="M10.800 13 L10.300 20" fill="none" stroke="#ecc9b7" stroke-width="2" stroke-linecap="round"/><path d="M11.200 11.600 L14 10.800 L19.800 11.600 L20.800 21 L24.300 40.800 L2.600 40.800 L10.500 21z" fill="#f0e5d9"/><path d="M9 41.500 v3 M14 41.500 v3" fill="none" stroke="#ecc9b7" stroke-width="2" stroke-linecap="round"/></g><g opacity="0.4"><rect x="-2" y="-2" width="35" height="48" fill="#e0ccb9" /><rect x="-2" y="-2" width="35" height="12" fill="#c7d1e7" /><rect x="-2" y="9.5" width="35" height="6.8" fill="#5d9eae" /><rect x="-2" y="9.5" width="35" height="1.6" fill="#4f8fa6" /><rect x="-2" y="15.8" width="35" height="4.2" fill="#dfe6ed" /><rect x="-2" y="19.8" width="35" height="7.5" fill="#c9c4d1" /><ellipse cx="13.4" cy="5.2" rx="6.08" ry="5.79" fill="#1a1314"/><ellipse cx="10.2" cy="6.5" rx="2.42" ry="3.66" fill="#1a1314"/><ellipse cx="15.3" cy="5.6" rx="2.4" ry="3" fill="#ecc9b7"/><path d="M19 13 L21.300 8.500 L18.200 6.500" fill="none" stroke="#ecc9b7" stroke-width="2.2" stroke-linecap="round"/><path d="M10.800 13 L10.300 20" fill="none" stroke="#ecc9b7" stroke-width="2" stroke-linecap="round"/><path d="M11.200 11.600 L14 10.800 L19.800 11.600 L20.800 21 L24.300 40.800 L2.600 40.800 L10.500 21z" fill="#f0e5d9"/><path d="M9 41.500 v3 M14 41.500 v3" fill="none" stroke="#ecc9b7" stroke-width="2" stroke-linecap="round"/></g></g></svg>
<div class="t" style="left:417.00px;top:179.00px;font-size:15.00px;color:#4a4e5f;letter-spacing:-0.033px;-webkit-text-stroke:0.2px #4a4e5f;">Summer Breeze Flow Dress</div>
<div class="t" style="left:754.00px;top:179.00px;font-size:15.00px;color:#4a4e5f;letter-spacing:0.344px;-webkit-text-stroke:0.2px #4a4e5f;">$45.00</div>
<div class="t" style="left:1046.60px;top:179.00px;font-size:15.00px;color:#4a4e5f;letter-spacing:0.263px;-webkit-text-stroke:0.2px #4a4e5f;">300 on sale</div>
<div class="tg" style="left:1350.5px;top:179.60px"></div>
<div class="t" style="left:1387.70px;top:179.00px;font-size:15.60px;color:#4a4e5f;letter-spacing:0.504px;-webkit-text-stroke:0.2px #4a4e5f;">Activated</div>
<svg class="a" style="left:1540.9px;top:180.70px" width="20" height="16" viewBox="0 0 20 16"><path d="M1.300 8 C3.800 3.600 6.800 2.200 10 2.200 S16.200 3.600 18.700 8 C16.200 12.400 13.200 13.800 10 13.800 S3.800 12.400 1.300 8z" fill="none" stroke="#3d4152" stroke-width="1.400" stroke-linejoin="round"/><circle cx="10" cy="8" r="2.500" fill="none" stroke="#3d4152" stroke-width="1.400"/></svg>
<svg class="a" style="left:1577.8px;top:179.10px" width="18" height="18" viewBox="0 0 18 18"><rect x="1.800" y="6" width="9.600" height="10.200" rx="1.600" fill="none" stroke="#3d4152" stroke-width="1.400"/><path d="M6.400 5.800 V3.400 a1.600 1.600 0 0 1 1.600-1.600 h6.400 a1.600 1.600 0 0 1 1.600 1.600 v6.800 a1.600 1.600 0 0 1-1.600 1.600 h-2.800" fill="none" stroke="#3d4152" stroke-width="1.400"/></svg>
<div class="rl" style="top:215.00px"></div>
<div class="cb" style="left:317.3px;top:233.60px"></div>
<svg class="a" style="left:370.50px;top:220.30px" width="30.6" height="44.2" viewBox="0 0 30.6 44.2"><defs><clipPath id="tc4"><rect width="30.6" height="44.2" rx="4.5"/></clipPath><filter id="tb4" x="-10%" y="-10%" width="120%" height="120%"><feGaussianBlur stdDeviation="0.80"/></filter></defs><g clip-path="url(#tc4)"><g filter="url(#tb4)"><rect x="-2" y="-2" width="35" height="48" fill="#c9bdba" /><rect x="-2" y="-2" width="35" height="18" fill="#e3e7ee" /><rect x="-2" y="-2" width="35" height="3.2" fill="#a4a9ad" /><rect x="1.5" y="1" width="1.6" height="15" fill="#b5bac2" /><rect x="26.5" y="1" width="1.6" height="15" fill="#b5bac2" /><rect x="5" y="3" width="4" height="12" fill="#cfd6e0" /><rect x="-2" y="16" width="7" height="11" fill="#6a7482" /><rect x="24" y="14" width="9" height="8" fill="#d5d9de" /><rect x="-2" y="27" width="35" height="20" fill="#c8bcb9" /><ellipse cx="14.2" cy="7.5" rx="7.14" ry="7.47" fill="#2a1c1b"/><ellipse cx="9.8" cy="12.5" rx="3.6" ry="4.33" fill="#2a1c1b"/><ellipse cx="19" cy="11.5" rx="2.42" ry="3.21" fill="#2a1c1b"/><ellipse cx="15.6" cy="7" rx="2.5" ry="3.3" fill="#ecc9b7"/><path d="M21.500 22 L24.300 16.500 L21.800 12.800" fill="none" stroke="#ecc9b7" stroke-width="2.3" stroke-linecap="round"/><path d="M8.600 18 L7.800 30" fill="none" stroke="#ecc9b7" stroke-width="2" stroke-linecap="round"/><path d="M8.500 15.800 Q12 14.200 14 15.500 Q16 17 18.500 15.200 L21.600 16 L21.800 33.800 L7.600 33.800z" fill="#efe5db"/><path d="M6 33.500 L22.300 33.500 L22.800 46 L5.300 46z" fill="#e2d8d0"/></g><g opacity="0.4"><rect x="-2" y="-2" width="35" height="48" fill="#c9bdba" /><rect x="-2" y="-2" width="35" height="18" fill="#e3e7ee" /><rect x="-2" y="-2" width="35" height="3.2" fill="#a4a9ad" /><rect x="1.5" y="1" width="1.6" height="15" fill="#b5bac2" /><rect x="26.5" y="1" width="1.6" height="15" fill="#b5bac2" /><rect x="5" y="3" width="4" height="12" fill="#cfd6e0" /><rect x="-2" y="16" width="7" height="11" fill="#6a7482" /><rect x="24" y="14" width="9" height="8" fill="#d5d9de" /><rect x="-2" y="27" width="35" height="20" fill="#c8bcb9" /><ellipse cx="14.2" cy="7.5" rx="7.14" ry="7.47" fill="#2a1c1b"/><ellipse cx="9.8" cy="12.5" rx="3.6" ry="4.33" fill="#2a1c1b"/><ellipse cx="19" cy="11.5" rx="2.42" ry="3.21" fill="#2a1c1b"/><ellipse cx="15.6" cy="7" rx="2.5" ry="3.3" fill="#ecc9b7"/><path d="M21.500 22 L24.300 16.500 L21.800 12.800" fill="none" stroke="#ecc9b7" stroke-width="2.3" stroke-linecap="round"/><path d="M8.600 18 L7.800 30" fill="none" stroke="#ecc9b7" stroke-width="2" stroke-linecap="round"/><path d="M8.500 15.800 Q12 14.200 14 15.500 Q16 17 18.500 15.200 L21.600 16 L21.800 33.800 L7.600 33.800z" fill="#efe5db"/><path d="M6 33.500 L22.300 33.500 L22.800 46 L5.300 46z" fill="#e2d8d0"/></g></g></svg>
<div class="t" style="left:417.00px;top:233.00px;font-size:15.00px;color:#4a4e5f;letter-spacing:0.059px;-webkit-text-stroke:0.2px #4a4e5f;">Glow Drape Sleeveless Top</div>
<div class="t" style="left:754.00px;top:233.00px;font-size:15.00px;color:#4a4e5f;letter-spacing:0.344px;-webkit-text-stroke:0.2px #4a4e5f;">$32.00</div>
<div class="t" style="left:1046.60px;top:233.00px;font-size:15.00px;color:#4a4e5f;letter-spacing:0.263px;-webkit-text-stroke:0.2px #4a4e5f;">300 on sale</div>
<div class="tg" style="left:1350.5px;top:233.60px"></div>
<div class="t" style="left:1387.70px;top:233.00px;font-size:15.60px;color:#4a4e5f;letter-spacing:0.504px;-webkit-text-stroke:0.2px #4a4e5f;">Activated</div>
<svg class="a" style="left:1540.9px;top:234.70px" width="20" height="16" viewBox="0 0 20 16"><path d="M1.300 8 C3.800 3.600 6.800 2.200 10 2.200 S16.200 3.600 18.700 8 C16.200 12.400 13.200 13.800 10 13.800 S3.800 12.400 1.300 8z" fill="none" stroke="#3d4152" stroke-width="1.400" stroke-linejoin="round"/><circle cx="10" cy="8" r="2.500" fill="none" stroke="#3d4152" stroke-width="1.400"/></svg>
<svg class="a" style="left:1577.8px;top:233.10px" width="18" height="18" viewBox="0 0 18 18"><rect x="1.800" y="6" width="9.600" height="10.200" rx="1.600" fill="none" stroke="#3d4152" stroke-width="1.400"/><path d="M6.400 5.800 V3.400 a1.600 1.600 0 0 1 1.600-1.600 h6.400 a1.600 1.600 0 0 1 1.600 1.600 v6.800 a1.600 1.600 0 0 1-1.600 1.600 h-2.800" fill="none" stroke="#3d4152" stroke-width="1.400"/></svg>
<div class="rl" style="top:269.00px"></div>
<div class="cb" style="left:317.3px;top:287.60px"></div>
<svg class="a" style="left:370.50px;top:274.30px" width="30.6" height="44.2" viewBox="0 0 30.6 44.2"><defs><clipPath id="tc5"><rect width="30.6" height="44.2" rx="4.5"/></clipPath><filter id="tb5" x="-10%" y="-10%" width="120%" height="120%"><feGaussianBlur stdDeviation="0.80"/></filter></defs><g clip-path="url(#tc5)"><g filter="url(#tb5)"><rect x="-2" y="-2" width="35" height="48" fill="#b4c2a6" /><rect x="-2" y="-2" width="12" height="12" fill="#dfe4d9" /><rect x="18" y="-2" width="15" height="30" fill="#a9b99b" /><rect x="-2" y="10" width="9" height="22" fill="#9aab8c" /><rect x="22" y="4" width="8" height="10" fill="#c3cfb6" /><rect x="-2" y="35" width="35" height="12" fill="#dccbbd" /><ellipse cx="14.4" cy="8" rx="6.55" ry="7.69" fill="#221715"/><ellipse cx="10.7" cy="14" rx="3.49" ry="5.9" fill="#221715"/><ellipse cx="15.6" cy="7.2" rx="2.5" ry="3.3" fill="#ecc9b7"/><rect x="14" y="10.5" width="3" height="3.5" fill="#ecc9b7" /><path d="M6.500 25 L5.800 37" fill="none" stroke="#ecc9b7" stroke-width="2.2" stroke-linecap="round"/><path d="M26 25 L25.600 33 L23 37" fill="none" stroke="#ecc9b7" stroke-width="2.2" stroke-linecap="round"/><path d="M9.300 14.800 Q12.500 13.500 14 14.200 Q15.800 16 18 14 L22.600 15.300 L27.300 20 L26.400 26 L23.200 25 L23.600 39.400 L7.600 39.400 L8.300 25 L5 26 L5.200 19.500z" fill="#c6d0c7"/><rect x="7" y="39.3" width="17" height="8" fill="#e5d8cd" /></g><g opacity="0.4"><rect x="-2" y="-2" width="35" height="48" fill="#b4c2a6" /><rect x="-2" y="-2" width="12" height="12" fill="#dfe4d9" /><rect x="18" y="-2" width="15" height="30" fill="#a9b99b" /><rect x="-2" y="10" width="9" height="22" fill="#9aab8c" /><rect x="22" y="4" width="8" height="10" fill="#c3cfb6" /><rect x="-2" y="35" width="35" height="12" fill="#dccbbd" /><ellipse cx="14.4" cy="8" rx="6.55" ry="7.69" fill="#221715"/><ellipse cx="10.7" cy="14" rx="3.49" ry="5.9" fill="#221715"/><ellipse cx="15.6" cy="7.2" rx="2.5" ry="3.3" fill="#ecc9b7"/><rect x="14" y="10.5" width="3" height="3.5" fill="#ecc9b7" /><path d="M6.500 25 L5.800 37" fill="none" stroke="#ecc9b7" stroke-width="2.2" stroke-linecap="round"/><path d="M26 25 L25.600 33 L23 37" fill="none" stroke="#ecc9b7" stroke-width="2.2" stroke-linecap="round"/><path d="M9.300 14.800 Q12.500 13.500 14 14.200 Q15.800 16 18 14 L22.600 15.300 L27.300 20 L26.400 26 L23.200 25 L23.600 39.400 L7.600 39.400 L8.300 25 L5 26 L5.200 19.500z" fill="#c6d0c7"/><rect x="7" y="39.3" width="17" height="8" fill="#e5d8cd" /></g></g></svg>
<div class="t" style="left:417.00px;top:287.00px;font-size:15.00px;color:#4a4e5f;letter-spacing:0.122px;-webkit-text-stroke:0.2px #4a4e5f;">Soft Mist Minimal Tee</div>
<div class="t" style="left:754.00px;top:287.00px;font-size:15.00px;color:#4a4e5f;letter-spacing:0.344px;-webkit-text-stroke:0.2px #4a4e5f;">$20.00</div>
<div class="t" style="left:1046.60px;top:287.00px;font-size:15.00px;color:#4a4e5f;letter-spacing:0.263px;-webkit-text-stroke:0.2px #4a4e5f;">300 on sale</div>
<div class="tg" style="left:1350.5px;top:287.60px"></div>
<div class="t" style="left:1387.70px;top:287.00px;font-size:15.60px;color:#4a4e5f;letter-spacing:0.504px;-webkit-text-stroke:0.2px #4a4e5f;">Activated</div>
<svg class="a" style="left:1540.9px;top:288.70px" width="20" height="16" viewBox="0 0 20 16"><path d="M1.300 8 C3.800 3.600 6.800 2.200 10 2.200 S16.200 3.600 18.700 8 C16.200 12.400 13.200 13.800 10 13.800 S3.800 12.400 1.300 8z" fill="none" stroke="#3d4152" stroke-width="1.400" stroke-linejoin="round"/><circle cx="10" cy="8" r="2.500" fill="none" stroke="#3d4152" stroke-width="1.400"/></svg>
<svg class="a" style="left:1577.8px;top:287.10px" width="18" height="18" viewBox="0 0 18 18"><rect x="1.800" y="6" width="9.600" height="10.200" rx="1.600" fill="none" stroke="#3d4152" stroke-width="1.400"/><path d="M6.400 5.800 V3.400 a1.600 1.600 0 0 1 1.600-1.600 h6.400 a1.600 1.600 0 0 1 1.600 1.600 v6.800 a1.600 1.600 0 0 1-1.600 1.600 h-2.800" fill="none" stroke="#3d4152" stroke-width="1.400"/></svg>
<div class="rl" style="top:323.00px"></div>
<div class="cb" style="left:317.3px;top:341.60px"></div>
<svg class="a" style="left:363.90px;top:328.30px" width="44" height="44" viewBox="0 0 44 44"><defs><clipPath id="tc6"><rect width="44" height="44" rx="4.5"/></clipPath><filter id="tb6" x="-10%" y="-10%" width="120%" height="120%"><feGaussianBlur stdDeviation="0.80"/></filter></defs><g clip-path="url(#tc6)"><g filter="url(#tb6)"><rect x="-2" y="-2" width="48" height="48" fill="#f1ebe1" /><rect x="14.3" y="2.6" width="13.8" height="2.6" fill="#4a4844" /><rect x="15.5" y="5.8" width="11.5" height="1.8" fill="#5a5853" /><rect x="17" y="8" width="9" height="1.6" fill="#6a6863" /><path d="M5.600 11 V7 Q8.600 2.800 11.600 7 V11" fill="none" stroke="#3a3b3d" stroke-width="1.5" stroke-linecap="round"/><rect x="0.4" y="10.8" width="17.8" height="12" fill="#7e7f84" rx="1.500"/><rect x="0.4" y="21.6" width="17.8" height="3.2" fill="#2c2d30" rx="1"/><rect x="2" y="12" width="4" height="9" fill="#9a9b9f" /><rect x="12" y="12" width="4" height="9" fill="#6b6c71" /><path d="M2 31.500 L15.500 25.800 L17.400 28.200 L16.800 30.400 L4 34.600z" fill="#3b4f6f"/><path d="M4.500 40.600 L16.500 35 L18.300 37.400 L17.800 39.600 L6 43z" fill="#3b4f6f"/><rect x="1.5" y="25.5" width="4" height="1" fill="#8b5a4a" /><rect x="3" y="35.5" width="4" height="1" fill="#8b5a4a" /><path d="M30 9 Q34.500 2.500 39 9 L40 14 L43.600 18 L44.500 40 L41.600 40.400 L40.800 24 L40.500 40.400 L27.300 40.400 L27 24 L24.200 40.400 L21.300 40 L23.500 18 L28.600 14z" fill="#5b5b61"/><path d="M31 10 Q34.500 6 38 10 L36.500 14.500 L32.500 14.500z" fill="#3d3d42"/><rect x="29" y="41.5" width="10" height="0.8" fill="#9a958c" /></g><g opacity="0.4"><rect x="-2" y="-2" width="48" height="48" fill="#f1ebe1" /><rect x="14.3" y="2.6" width="13.8" height="2.6" fill="#4a4844" /><rect x="15.5" y="5.8" width="11.5" height="1.8" fill="#5a5853" /><rect x="17" y="8" width="9" height="1.6" fill="#6a6863" /><path d="M5.600 11 V7 Q8.600 2.800 11.600 7 V11" fill="none" stroke="#3a3b3d" stroke-width="1.5" stroke-linecap="round"/><rect x="0.4" y="10.8" width="17.8" height="12" fill="#7e7f84" rx="1.500"/><rect x="0.4" y="21.6" width="17.8" height="3.2" fill="#2c2d30" rx="1"/><rect x="2" y="12" width="4" height="9" fill="#9a9b9f" /><rect x="12" y="12" width="4" height="9" fill="#6b6c71" /><path d="M2 31.500 L15.500 25.800 L17.400 28.200 L16.800 30.400 L4 34.600z" fill="#3b4f6f"/><path d="M4.500 40.600 L16.500 35 L18.300 37.400 L17.800 39.600 L6 43z" fill="#3b4f6f"/><rect x="1.5" y="25.5" width="4" height="1" fill="#8b5a4a" /><rect x="3" y="35.5" width="4" height="1" fill="#8b5a4a" /><path d="M30 9 Q34.500 2.500 39 9 L40 14 L43.600 18 L44.500 40 L41.600 40.400 L40.800 24 L40.500 40.400 L27.300 40.400 L27 24 L24.200 40.400 L21.300 40 L23.500 18 L28.600 14z" fill="#5b5b61"/><path d="M31 10 Q34.500 6 38 10 L36.500 14.500 L32.500 14.500z" fill="#3d3d42"/><rect x="29" y="41.5" width="10" height="0.8" fill="#9a958c" /></g></g></svg>
<div class="t" style="left:417.00px;top:341.00px;font-size:15.00px;color:#4a4e5f;letter-spacing:-0.007px;-webkit-text-stroke:0.2px #4a4e5f;">Weekend Getaway Bundle</div>
<div class="t" style="left:754.00px;top:341.00px;font-size:15.00px;color:#4a4e5f;letter-spacing:-0.104px;-webkit-text-stroke:0.2px #4a4e5f;">$130.00</div>
<div class="t" style="left:1046.60px;top:341.00px;font-size:15.00px;color:#4a4e5f;letter-spacing:-0.067px;-webkit-text-stroke:0.2px #4a4e5f;">126 on sale</div>
<div class="tg" style="left:1350.5px;top:341.60px"></div>
<div class="t" style="left:1387.70px;top:341.00px;font-size:15.60px;color:#4a4e5f;letter-spacing:0.504px;-webkit-text-stroke:0.2px #4a4e5f;">Activated</div>
<svg class="a" style="left:1540.9px;top:342.70px" width="20" height="16" viewBox="0 0 20 16"><path d="M1.300 8 C3.800 3.600 6.800 2.200 10 2.200 S16.200 3.600 18.700 8 C16.200 12.400 13.200 13.800 10 13.800 S3.800 12.400 1.300 8z" fill="none" stroke="#3d4152" stroke-width="1.400" stroke-linejoin="round"/><circle cx="10" cy="8" r="2.500" fill="none" stroke="#3d4152" stroke-width="1.400"/></svg>
<svg class="a" style="left:1577.8px;top:341.10px" width="18" height="18" viewBox="0 0 18 18"><rect x="1.800" y="6" width="9.600" height="10.200" rx="1.600" fill="none" stroke="#3d4152" stroke-width="1.400"/><path d="M6.400 5.800 V3.400 a1.600 1.600 0 0 1 1.600-1.600 h6.400 a1.600 1.600 0 0 1 1.600 1.600 v6.800 a1.600 1.600 0 0 1-1.600 1.600 h-2.800" fill="none" stroke="#3d4152" stroke-width="1.400"/></svg>
<div class="rl" style="top:377.00px"></div>
<div class="cb" style="left:317.3px;top:395.60px"></div>
<svg class="a" style="left:363.9px;top:382.30px" width="44" height="44" viewBox="0 0 44 44"><defs><clipPath id="tc7a"><rect width="21.600" height="44" rx="4"/></clipPath><clipPath id="tc7b"><rect x="22.600" width="21.400" height="44" rx="4"/></clipPath><filter id="tb7"><feGaussianBlur stdDeviation="0.8"/></filter></defs><g clip-path="url(#tc7a)"><g filter="url(#tb7)"><rect x="-2" y="-2" width="26" height="48" fill="#4b5a2a" /><rect x="-2" y="-2" width="8" height="20" fill="#66772f" /><rect x="15" y="0" width="8" height="30" fill="#3a4a22" /><rect x="0" y="14" width="5" height="12" fill="#7a8a3a" /><ellipse cx="10.6" cy="3.6" rx="2.6" ry="3.2" fill="#2a1f1c"/><ellipse cx="10.7" cy="4.4" rx="1.5" ry="1.9" fill="#d9b39c"/><path d="M5.300 11 L4.500 17" fill="none" stroke="#d9b39c" stroke-width="1.6" stroke-linecap="round"/><path d="M16 11 L16.600 17" fill="none" stroke="#d9b39c" stroke-width="1.6" stroke-linecap="round"/><path d="M6.500 8.600 Q10.600 7 15 8.600 L16.800 11.500 L15 12.500 L15 18.400 L6.300 18.400 L6.300 12.500 L4.500 11.500z" fill="#bfe2c3"/><rect x="6" y="18.2" width="9.5" height="4" fill="#2f4a3a" /></g></g><g clip-path="url(#tc7b)"><g filter="url(#tb7)"><rect x="22" y="-2" width="24" height="48" fill="#eceeef" /><path d="M26.500 9.800 L39.500 9.800 L40.500 24 L25.500 24z" fill="#3f5a47"/><rect x="26.5" y="9.8" width="13" height="1.6" fill="#355040" /></g></g></svg>
<div class="t" style="left:417.00px;top:395.00px;font-size:15.00px;color:#4a4e5f;letter-spacing:-0.003px;-webkit-text-stroke:0.2px #4a4e5f;">Summer Comfort Bundle</div>
<div class="t" style="left:754.00px;top:395.00px;font-size:15.00px;color:#4a4e5f;letter-spacing:0.344px;-webkit-text-stroke:0.2px #4a4e5f;">$58.00</div>
<div class="t" style="left:1046.60px;top:386.00px;font-size:15.00px;color:#4a4e5f;letter-spacing:0.132px;-webkit-text-stroke:0.2px #4a4e5f;">96 on sale · 4 variants</div>
<div class="tg" style="left:1350.5px;top:395.60px"></div>
<div class="t" style="left:1387.70px;top:395.00px;font-size:15.60px;color:#4a4e5f;letter-spacing:0.504px;-webkit-text-stroke:0.2px #4a4e5f;">Activated</div>
<svg class="a" style="left:1540.9px;top:396.70px" width="20" height="16" viewBox="0 0 20 16"><path d="M1.300 8 C3.800 3.600 6.800 2.200 10 2.200 S16.200 3.600 18.700 8 C16.200 12.400 13.200 13.800 10 13.800 S3.800 12.400 1.300 8z" fill="none" stroke="#3d4152" stroke-width="1.400" stroke-linejoin="round"/><circle cx="10" cy="8" r="2.500" fill="none" stroke="#3d4152" stroke-width="1.400"/></svg>
<svg class="a" style="left:1577.8px;top:395.10px" width="18" height="18" viewBox="0 0 18 18"><rect x="1.800" y="6" width="9.600" height="10.200" rx="1.600" fill="none" stroke="#3d4152" stroke-width="1.400"/><path d="M6.400 5.800 V3.400 a1.600 1.600 0 0 1 1.600-1.600 h6.400 a1.600 1.600 0 0 1 1.600 1.600 v6.800 a1.600 1.600 0 0 1-1.600 1.600 h-2.800" fill="none" stroke="#3d4152" stroke-width="1.400"/></svg>
</div>
<div class="a" style="left:302px;top:737.5px;width:1353.5px;height:1px;background:#eceef4"></div>
<div class="a" style="left:1641.5px;top:335px;width:1px;height:403px;background:#f0f1f6"></div>
<div class="a" style="left:1645.5px;top:337.5px;width:7px;height:102px;border-radius:4px;background:#c4c4c7"></div>
<div class="box" style="left:1514px;top:757px;width:35px;height:35px;background:#f5f6fb;border-color:#d9dce8"></div>
<svg class="a" style="left:1524.3px;top:766.3px" width="14" height="16" viewBox="0 0 14 16"><path d="M9.200 3 L4.200 8 L9.200 13" fill="none" stroke="#a9aec3" stroke-width="1.400" stroke-linecap="round" stroke-linejoin="round"/></svg>
<div class="box" style="left:1557.7px;top:757px;width:36px;height:35px;background:#e9eeff;border-color:#7f9cf5"></div>
<div class="t m" style="left:1571.90px;top:765.00px;font-size:14.60px;color:#2f62e8;">1</div>
<div class="box" style="left:1602.6px;top:757px;width:35px;height:35px;background:#f5f6fb;border-color:#d9dce8"></div>
<svg class="a" style="left:1613px;top:766.3px" width="14" height="16" viewBox="0 0 14 16"><path d="M4.800 3 L9.800 8 L4.800 13" fill="none" stroke="#a9aec3" stroke-width="1.400" stroke-linecap="round" stroke-linejoin="round"/></svg>
<div class="t m" style="left:866.70px;top:828.00px;font-size:15.40px;color:#1f2230;letter-spacing:0.515px;">Learn more about</div>
<div class="t m" style="left:1002.00px;top:828.00px;font-size:15.40px;color:#2f62e8;letter-spacing:0.604px;">Products</div>
<svg class="a" style="left:1073px;top:829.500px" width="17" height="17" viewBox="0 0 17 17"><path d="M7.600 3 H3.600 a1.400 1.400 0 0 0-1.400 1.400 V13.400 a1.400 1.400 0 0 0 1.400 1.400 H12.600 a1.400 1.400 0 0 0 1.400-1.400 V9.600" fill="none" stroke="#2f62e8" stroke-width="1.500"/><path d="M10.400 1.800 H15.200 V6.600 M15 2 L8.400 8.600" fill="none" stroke="#2f62e8" stroke-width="1.500"/></svg>

<!-- OVERLAYS -->
<div class="a" style="left:1526.3px;top:83.1px;width:130.8px;height:35.1px;border-radius:8px;background:#3463f7"></div>
<div class="t m" style="left:1539.40px;top:91.00px;font-size:15.00px;color:#fff;letter-spacing:0.383px;">Create product</div>
<div class="hl" style="left:0px;top:136px;width:270px;height:57.8px"></div>
<div class="hl" style="left:1509.8px;top:66.2px;width:164.4px;height:68px"></div>
<div class="hl" style="left:298px;top:435.8px;width:1344.4px;height:66.2px"></div>
<div class="a" style="left:283.75px;top:125.55px;width:80.60px;height:80.60px;border-radius:50%;background:#386dfa"></div>
<svg class="a" style="left:304.05px;top:140.85px" width="40" height="50" viewBox="-20 -25 40 50"><path d="M5.300 -19 L5.300 21.600 L-2.400 21.600 L-2.400 -9.300 Q-7 -7.100 -12 -6.300 L-12.400 -12.300 Q-5.500 -13.800 -0.600 -19 Z" fill="#fff"/></svg>
<div class="a" style="left:1419.80px;top:60.20px;width:80.40px;height:80.40px;border-radius:50%;background:#386dfa"></div>
<div class="a" style="left:1420.60px;top:61.50px;width:80.40px;height:80.40px;line-height:80.40px;text-align:center;color:#fff;font-size:57.50px;-webkit-text-stroke:1.4px #fff">2</div>
<div class="a" style="left:203.60px;top:428.40px;width:80.40px;height:80.40px;border-radius:50%;background:#386dfa"></div>
<div class="a" style="left:204.40px;top:429.70px;width:80.40px;height:80.40px;line-height:80.40px;text-align:center;color:#fff;font-size:57.50px;-webkit-text-stroke:1.4px #fff">2</div>
<div class="a" style="left:1621.5px;top:731.5px;width:53.5px;height:53.5px;border-radius:50%;background:#2e82f6;box-shadow:0 2px 10px rgba(40,60,120,0.28)"></div>
<svg class="a" style="left:1634px;top:743px" width="30" height="32" viewBox="0 0 30 32"><path d="M5.600 3 h18 a3 3 0 0 1 3 3 v22.600 l-4.800-3.400 h-16.200 a3 3 0 0 1-3-3 v-16.200 a3 3 0 0 1 3-3z" fill="#fff"/><path d="M7.400 20.200 q7.300 4.400 14.600 0" fill="none" stroke="#2e82f6" stroke-width="1.500" stroke-linecap="round"/></svg>

</body>
</html>
